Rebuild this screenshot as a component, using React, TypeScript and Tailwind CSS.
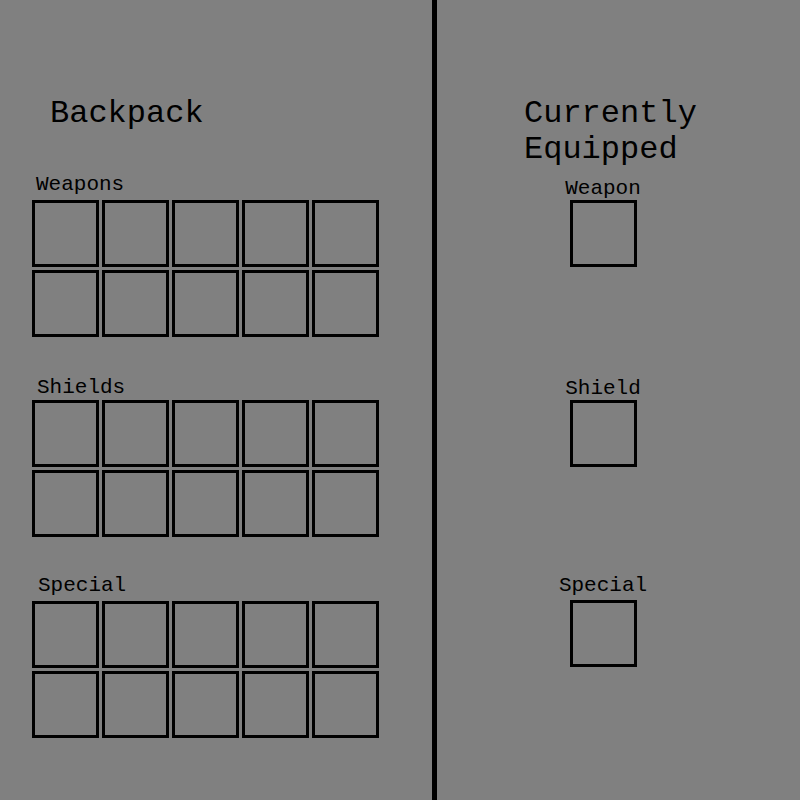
const mono =
  "font-['Courier_New','Nimbus_Mono_PS','FreeMono','Liberation_Mono',monospace]";

function Slot() {
  return <div className="w-[67px] h-[67px] border-[3px] border-black" />;
}

function SlotGrid() {
  return (
    <div className="grid grid-cols-5 gap-[3px] w-fit">
      {[...Array(10)].map((_, i) => (
        <Slot key={i} />
      ))}
    </div>
  );
}

const backpack = [
  { name: "Weapons", label: "mt-[41px] ml-[4px]", grid: "mt-[3px]" },
  { name: "Shields", label: "mt-[39px] ml-[5px]", grid: "mt-0" },
  { name: "Special", label: "mt-[37px] ml-[6px]", grid: "mt-[3px]" },
];

const equipped = [
  { name: "Weapon", wrap: "mt-[9px]", grid: "mt-0" },
  { name: "Shield", wrap: "mt-[110px]", grid: "mt-0" },
  { name: "Special", wrap: "mt-[107px]", grid: "mt-[3px]" },
];

export default function App() {
  return (
    <div className={`w-[800px] h-[800px] bg-[#808080] text-black flex ${mono}`}>
      {/* Backpack side */}
      <div className="w-[432px] h-full pt-[96px] pl-[32px]">
        <h1 className="text-[32px] leading-[36px] ml-[18px]">Backpack</h1>
        {backpack.map((g) => (
          <div key={g.name}>
            <div className={`text-[21px] leading-[24px] ${g.label}`}>{g.name}</div>
            <div className={g.grid}>
              <SlotGrid />
            </div>
          </div>
        ))}
      </div>

      {/* divider */}
      <div className="w-[5px] h-full bg-black" />

      {/* Equipped side */}
      <div className="flex-1 h-full pt-[96px] pl-[85px]">
        <h1 className="text-[32px] leading-[36px] ml-[2px]">
          Currently
          <br />
          Equipped
        </h1>
        <div className="w-[100px] ml-[31px] flex flex-col items-center">
          {equipped.map((e) => (
            <div key={e.name} className={`flex flex-col items-center ${e.wrap}`}>
              <div className="text-[21px] leading-[23px]">{e.name}</div>
              <div className={e.grid}>
                <Slot />
              </div>
            </div>
          ))}
        </div>
      </div>
    </div>
  );
}
